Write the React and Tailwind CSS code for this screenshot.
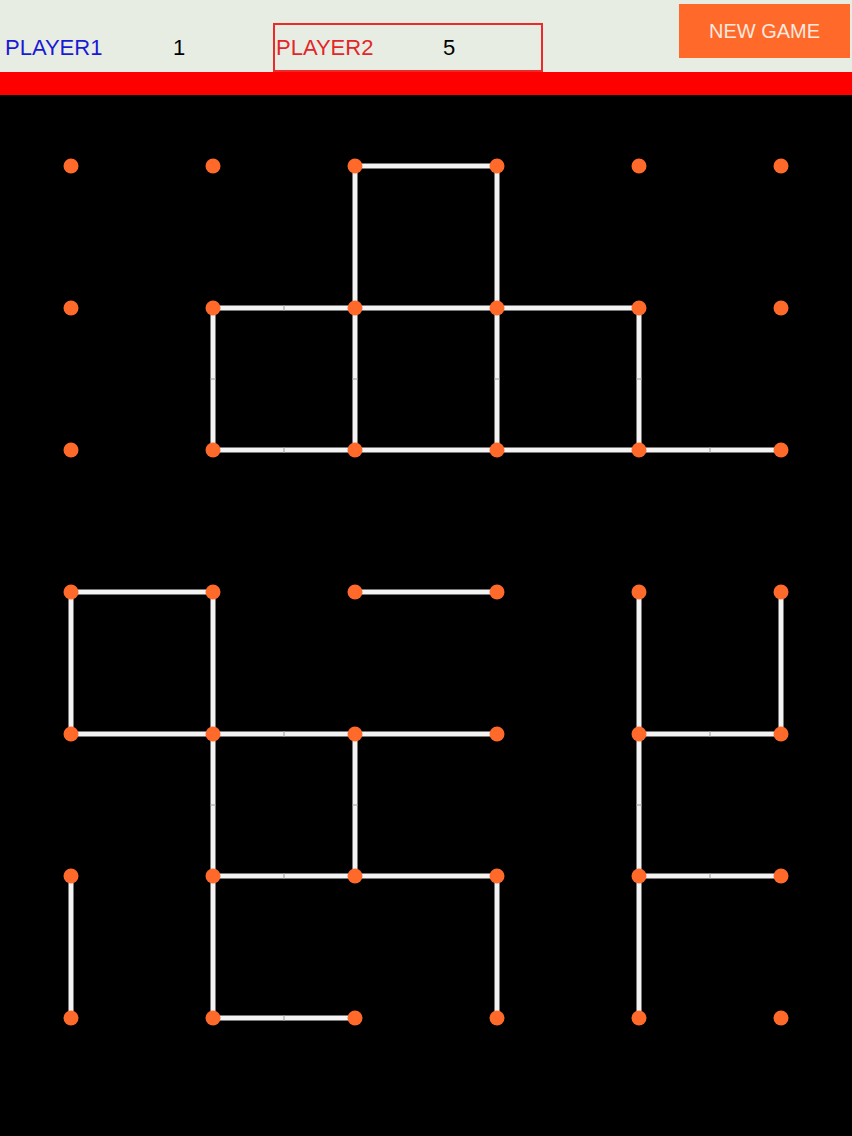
import React from 'react'

const COLS = 6
const ROWS = 7
const STEP = 142
const OFF = 71

const lines = [
  [2, 0, 'h'],
  [1, 1, 'h', true], [2, 1, 'h'], [3, 1, 'h'],
  [1, 2, 'h', true], [2, 2, 'h'], [3, 2, 'h'], [4, 2, 'h', true],
  [0, 3, 'h'], [2, 3, 'h'],
  [0, 4, 'h'], [1, 4, 'h', true], [2, 4, 'h'], [4, 4, 'h', true],
  [1, 5, 'h', true], [2, 5, 'h'], [4, 5, 'h', true],
  [1, 6, 'h', true],
  [0, 3, 'v'], [0, 5, 'v'],
  [1, 1, 'v', true], [1, 3, 'v'], [1, 4, 'v', true], [1, 5, 'v'],
  [2, 0, 'v'], [2, 1, 'v', true], [2, 4, 'v', true],
  [3, 0, 'v'], [3, 1, 'v', true], [3, 5, 'v'],
  [4, 1, 'v', true], [4, 3, 'v'], [4, 4, 'v', true], [4, 5, 'v'],
  [5, 3, 'v'],
]

function Board() {
  const dots = []
  for (let r = 0; r < ROWS; r++) {
    for (let c = 0; c < COLS; c++) {
      dots.push(<circle key={`${c}-${r}`} cx={OFF + c * STEP} cy={OFF + r * STEP} r="7.5" fill="#ff6a2b" />)
    }
  }
  return (
    <svg width="852" height="1041" className="block">
      {lines.map(([c, r, d, seam], i) => {
        const x1 = OFF + c * STEP
        const y1 = OFF + r * STEP
        const x2 = d === 'h' ? x1 + STEP : x1
        const y2 = d === 'h' ? y1 : y1 + STEP
        const mx = (x1 + x2) / 2
        const my = (y1 + y2) / 2
        return (
          <g key={i}>
            <line x1={x1} y1={y1} x2={x2} y2={y2} stroke="#f3f3f3" strokeWidth="5" />
            {seam && (d === 'h'
              ? <line x1={mx} y1={my - 3} x2={mx} y2={my + 3} stroke="#9a9a9a" strokeWidth="1" />
              : <line x1={mx - 3} y1={my} x2={mx + 3} y2={my} stroke="#9a9a9a" strokeWidth="1" />)}
          </g>
        )
      })}
      {dots}
    </svg>
  )
}

export default function App() {
  return (
    <div className="w-[852px] h-[1136px] bg-black flex flex-col font-['Liberation_Sans',Arial,sans-serif]">
      <header className="h-[72px] bg-[#e8ede3] flex">
        <div className="mt-[23px] w-[270px] h-[49px] flex items-center pl-[5px] text-[22px]">
          <span className="w-[168px] text-[#1a1ad6]">PLAYER1</span>
          <span className="text-black">1</span>
        </div>
        <div className="mt-[23px] ml-[3px] w-[270px] h-[49px] border-2 border-[#ec2a2a] flex items-center pl-px text-[22px]">
          <span className="w-[167px] text-[#e3262a]">PLAYER2</span>
          <span className="text-black">5</span>
        </div>
        <button className="ml-auto mt-[4px] mr-[2px] w-[171px] h-[54px] bg-[#ff6a2b] text-[#fbe9df] text-[20px] flex items-center justify-center">
          NEW GAME
        </button>
      </header>
      <div className="h-[23px] bg-[#ff0000]" />
      <Board />
    </div>
  )
}
